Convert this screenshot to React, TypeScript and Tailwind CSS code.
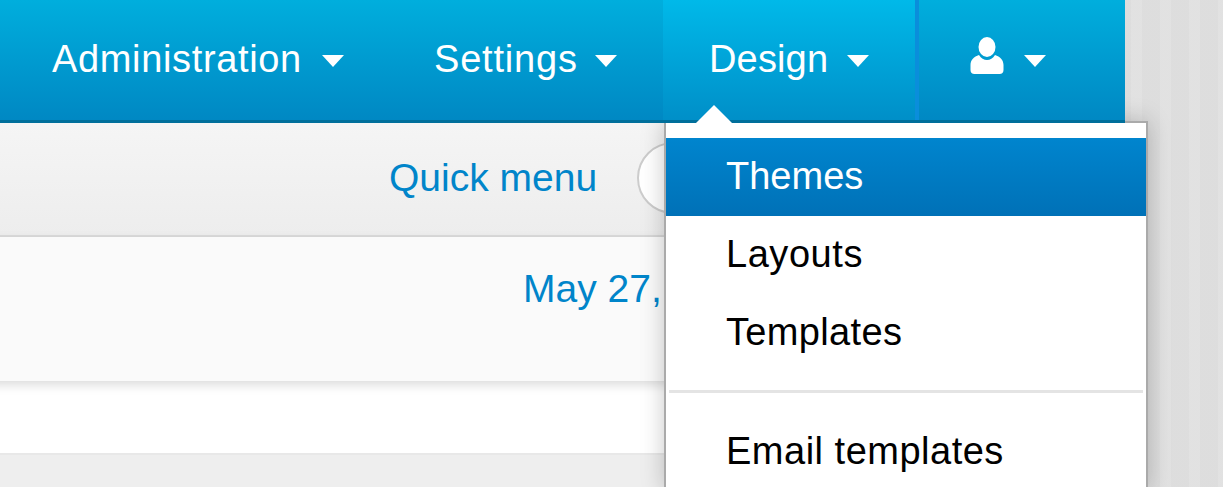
import React from "react";

const Caret = ({ gap }: { gap: string }) => (
  <span className={`${gap} mt-[3px] h-0 w-0 border-x-[11px] border-t-[12px] border-x-transparent border-t-white`} />
);

const UserIcon = () => (
  <svg width="34" height="38" viewBox="0 0 34 38" fill="#fff" className="-mt-[6px]">
    <ellipse cx="17" cy="10" rx="8.5" ry="10" />
    <path d="M9 18C11 21.500 14 23 17 23C20 23 23 21.500 25 18C30 19.500 33.500 23 33.500 28V33C33.500 35.500 32 37 29.500 37H4.500C2 37 .5 35.500 .5 33V28C.5 23 4 19.500 9 18Z" />
  </svg>
);

const App = () => {
  return (
    <div
      className="relative h-[487px] w-[1223px] overflow-hidden bg-[#e0e0e0] bg-[repeating-linear-gradient(90deg,rgba(255,255,255,0.05)_0px,rgba(255,255,255,0.05)_11px,rgba(0,0,0,0.012)_11px,rgba(0,0,0,0.012)_29px)]"
      style={{ fontFamily: '"Liberation Sans", Arial, sans-serif' }}
    >
      <div className="w-[1125px]">
        {/* top nav */}
        <nav className="relative z-10 flex h-[123px] border-b-[3px] border-[#006f9b] bg-gradient-to-b from-[#00aedd] to-[#0088c3] text-[38px] text-white">
          <a className="flex w-[388px] items-center pl-[52px] pb-[2px]">
            <span className="tracking-[0.65px]">Administration</span>
            <Caret gap="ml-[20px]" />
          </a>
          <a className="flex w-[275px] items-center pl-[46px] pb-[2px]">
            <span className="tracking-[0.8px]">Settings</span>
            <Caret gap="ml-[17px]" />
          </a>
          <a className="flex w-[252px] items-center bg-gradient-to-b from-[#00b9e9] to-[#008fc8] pl-[46px] pb-[2px]">
            <span className="tracking-[0.15px]">Design</span>
            <Caret gap="ml-[19px]" />
          </a>
          <div className="w-[4px] bg-[#0a8edb]" />
          <a className="flex flex-1 items-center pl-[51px] pb-[2px]">
            <UserIcon />
            <Caret gap="ml-[20px]" />
          </a>
        </nav>

        {/* toolbar */}
        <div className="flex h-[114px] items-center border-b-[2px] border-[#dcdcdc] bg-gradient-to-b from-[#f5f5f5] to-[#ededed] pl-[389px] pb-[2px] text-[39px] text-[#0085ca]">
          <span>Quick menu</span>
          <div className="ml-[40px] h-[72px] w-[300px] rounded-full border-[2px] border-[#cccccc] bg-white" />
        </div>

        {/* date row */}
        <div className="relative z-[1] -ml-[20px] h-[144px] bg-[#fafafa] pl-[543px] pt-[28px] text-[39px] leading-[48px] text-[#0085ca] shadow-[0_4px_10px_rgba(0,0,0,0.14)]">
          May 27, 2015
        </div>

        <div className="h-[72px] bg-white" />
        <div className="h-[40px] border-t-[2px] border-[#e8e8e8] bg-[#eeeeee]" />
      </div>

      {/* dropdown arrow */}
      <div className="absolute left-[696px] top-[105px] z-20 h-0 w-0 border-x-[18px] border-b-[18px] border-x-transparent border-b-white" />

      {/* dropdown */}
      <div className="absolute left-[664px] top-[121px] z-[5] w-[484px] border-x-[2px] border-t-[2px] border-[#aaaaaa] bg-white pt-[15px] text-[38px] text-black shadow-[0_0_22px_rgba(0,0,0,0.22)]">
        <ul>
          <li className="flex h-[78px] items-center bg-gradient-to-b from-[#0085ce] to-[#0071b7] pb-[2px] pl-[60px] text-white">
            Themes
          </li>
          <li className="flex h-[78px] items-center pb-[2px] pl-[60px] tracking-[0.55px]">Layouts</li>
          <li className="flex h-[78px] items-center pb-[2px] pl-[60px] tracking-[0.35px]">Templates</li>
          <li className="mx-[3px] mt-[18px] mb-[20px] h-[3px] bg-[#e4e4e4]" />
          <li className="flex h-[78px] items-center pb-[2px] pl-[60px] tracking-[0.5px]">
            Email templates
          </li>
        </ul>
      </div>
    </div>
  );
};

export default App;
